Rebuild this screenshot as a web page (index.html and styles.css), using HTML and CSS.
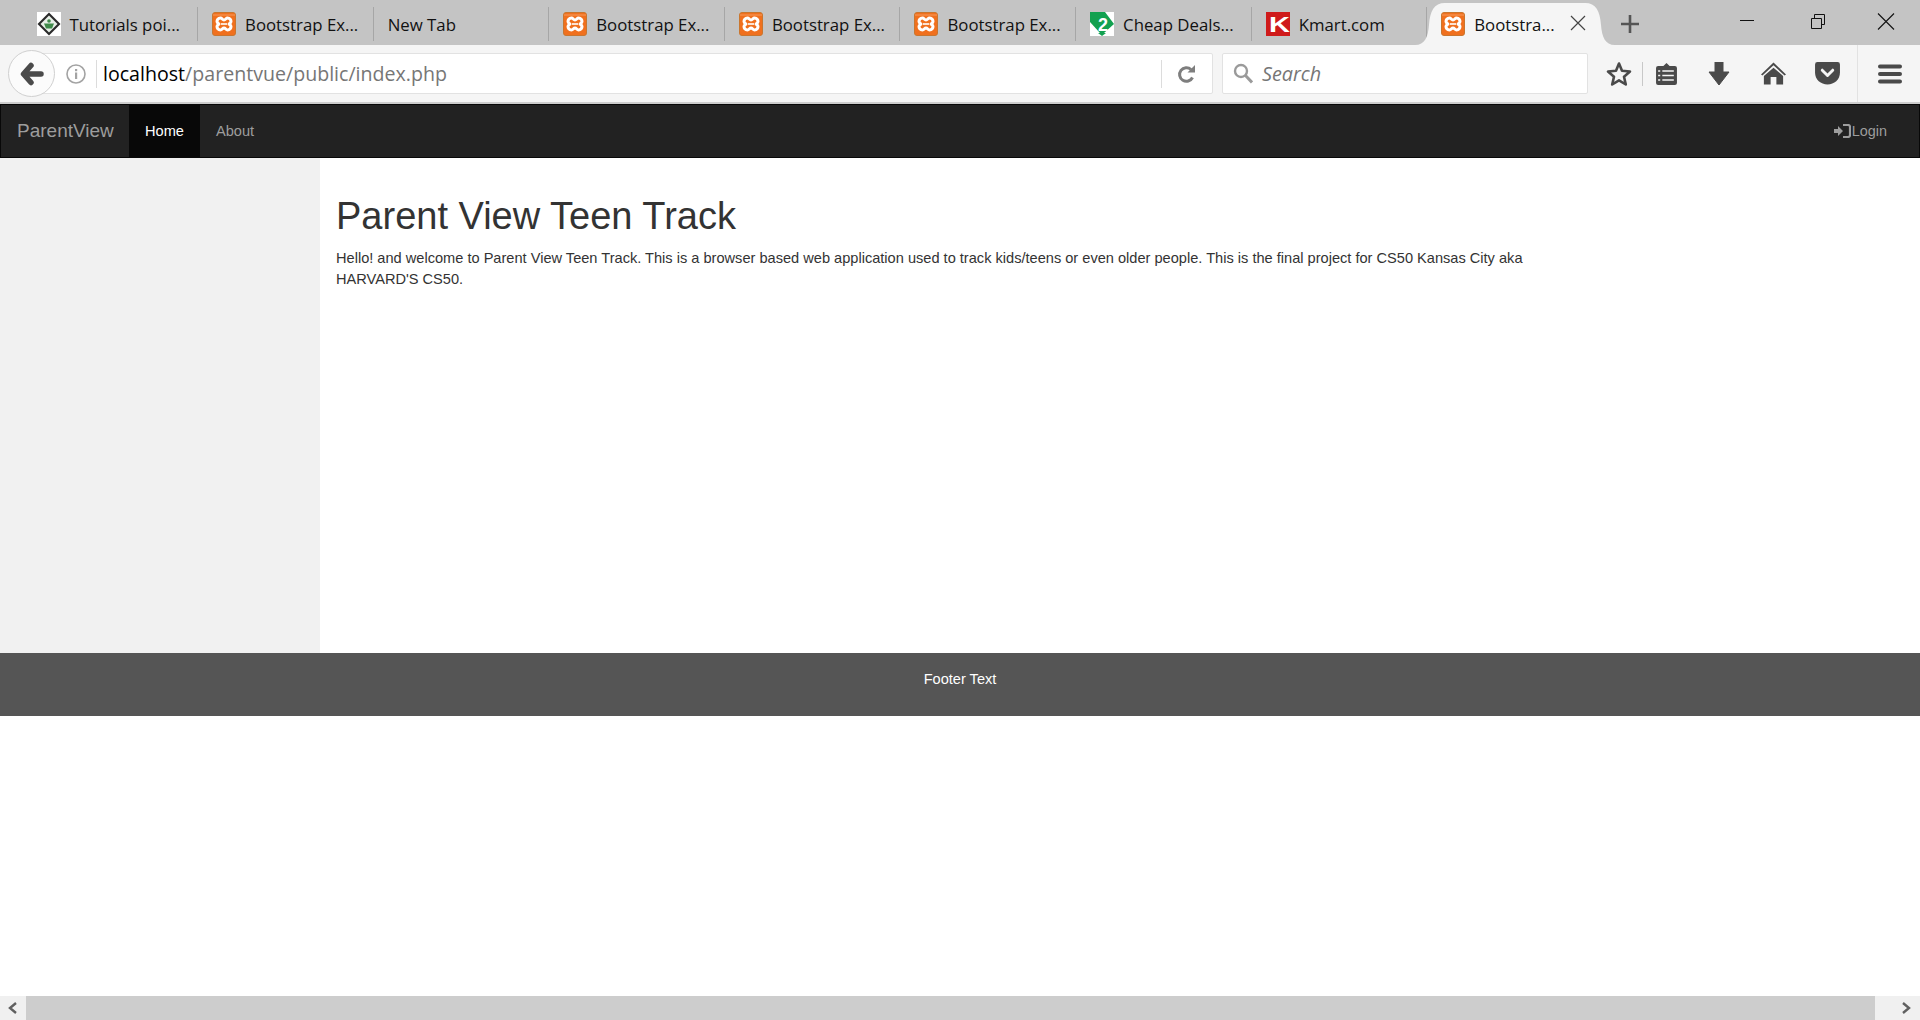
FILE: index.html
```html
<html>
<head>
<title>Bootstrap Example</title>
<link rel="stylesheet" href="styles.css">
</head>
<body>

<svg class="defs" width="0" height="0">
  <symbol id="xampp" viewBox="0 0 24 24">
    <rect x="0.5" y="0.5" width="23" height="23" rx="2.500" fill="#f0701e" stroke="#c9762f"/>
    <path d="M1 3H23" stroke="#f79a5c" stroke-width="1"/>
    <path d="M8.500 6C10 6 10.500 8 12 8C13.500 8 14 6 15.500 6C18 6 19 8 19 9.500C19 11 17 11.500 17 12C17 12.500 19 13 19 14.500C19 16 18 18 15.500 18C14 18 13.500 16 12 16C10.500 16 10 18 8.500 18C6 18 5 16 5 14.500C5 13 7 12.500 7 12C7 11.500 5 11 5 9.500C5 8 6 6 8.500 6z" fill="none" stroke="#fff" stroke-width="3"/>
    <path d="M9 12H15" stroke="#fff" stroke-width="1.600"/>
  </symbol>
</svg>

<div class="tabstrip">
  <div class="tab">
    <svg class="favicon" viewBox="0 0 24 24">
      <rect width="24" height="24" fill="#fff"/>
      <path d="M12 0.500 23.500 12 12 23.500 0.500 12z" fill="#2a2a2a"/>
      <path d="M12 3.500 20.500 12 12 20.500 3.500 12z" fill="#e8efe8"/>
      <path d="M7 11.500H17L15 16.500H9z" fill="#3f8a4a"/>
      <circle cx="12" cy="9" r="1.800" fill="#3f8a4a"/>
    </svg>
    <span>Tutorials poi...</span>
  </div>
  <div class="tab"><svg class="favicon"><use href="#xampp"/></svg><span>Bootstrap Ex...</span></div>
  <div class="tab tab-plain"><span>New Tab</span></div>
  <div class="tab"><svg class="favicon"><use href="#xampp"/></svg><span>Bootstrap Ex...</span></div>
  <div class="tab"><svg class="favicon"><use href="#xampp"/></svg><span>Bootstrap Ex...</span></div>
  <div class="tab"><svg class="favicon"><use href="#xampp"/></svg><span>Bootstrap Ex...</span></div>
  <div class="tab">
    <svg class="favicon" viewBox="0 0 24 24">
      <rect width="24" height="24" fill="#fff"/>
      <path d="M0 0H15L24 12 14 21H10L0 10z" fill="#12a150"/>
      <path d="M8 21H16L12 24z" fill="#12a150"/>
      <text x="13" y="19" class="deal-num">2</text>
    </svg>
    <span>Cheap Deals...</span>
  </div>
  <div class="tab">
    <svg class="favicon" viewBox="0 0 24 24">
      <rect width="24" height="24" fill="#cf1a1a"/>
      <text x="3" y="20" class="kmart-k" textLength="21" lengthAdjust="spacingAndGlyphs">K</text>
    </svg>
    <span>Kmart.com</span>
  </div>
  <div class="tab tab-active">
    <svg class="tab-shape" viewBox="0 0 200 42" preserveAspectRatio="none">
      <path d="M0 42C10 42 13 34 14 22 15 8 19 0 30 0H170C181 0 185 8 186 22 187 34 190 42 200 42z" fill="#f5f5f5"/>
    </svg>
    <svg class="favicon"><use href="#xampp"/></svg>
    <span>Bootstra...</span>
    <svg class="tab-close" viewBox="0 0 16 16"><path d="M1 1 15 15M15 1 1 15" stroke="#444" stroke-width="1.200" fill="none"/></svg>
  </div>
  <svg class="newtab" viewBox="0 0 20 20"><path d="M10 1V19M1 10H19" stroke="#555" stroke-width="2.600" fill="none"/></svg>
  <div class="winctl">
    <svg class="winbtn" viewBox="0 0 70 40"><path d="M30 20.500H44" stroke="#111" stroke-width="1" fill="none"/></svg>
    <svg class="winbtn" viewBox="0 0 70 40"><path d="M31.500 18.500H41.500V28.500H31.500zM34.500 18.500V14.500H44.500V24.500H41.500" stroke="#111" stroke-width="1" fill="none"/></svg>
    <svg class="winbtn" viewBox="0 0 70 40"><path d="M28 13.500 44 29.500M44 13.500 28 29.500" stroke="#111" stroke-width="1.100" fill="none"/></svg>
  </div>
</div>

<div class="toolbar">
  <div class="backbtn">
    <svg width="24" height="24" viewBox="0 0 24 24"><path d="M11 3.500 3.500 12 11 20.500M4 12H21" stroke="#4a4a4a" stroke-width="5.500" stroke-linejoin="round" stroke-linecap="round" fill="none"/></svg>
  </div>
  <div class="urlbar">
    <svg class="info" viewBox="0 0 20 20">
      <circle cx="10" cy="10" r="9" fill="none" stroke="#a3a3a3" stroke-width="1.600"/>
      <rect x="9" y="8.500" width="2.200" height="6.500" fill="#a3a3a3"/>
      <rect x="9" y="5" width="2.200" height="2.200" fill="#a3a3a3"/>
    </svg>
    <div class="url"><span class="url-host">localhost</span>/parentvue/public/index.php</div>
    <div class="reload">
      <svg width="20" height="20" viewBox="0 0 20 20"><path d="M15.500 13.500A6.800 6.800 0 1 1 14 5.500" stroke="#7e7e7e" stroke-width="3" fill="none"/><path d="M10.500 8.500H18V1z" fill="#7e7e7e"/></svg>
    </div>
  </div>
  <div class="searchbar">
    <svg width="20" height="21" viewBox="0 0 20 21"><circle cx="8" cy="8" r="6" fill="none" stroke="#9a9a9a" stroke-width="2.400"/><path d="M12.500 12.500 19 19.500" stroke="#9a9a9a" stroke-width="3"/></svg>
    <span>Search</span>
  </div>
  <div class="tools">
    <svg class="tool tool-star" viewBox="0 0 26 26"><path d="M13 2.500 16 9.800 24 10.500 18 15.700 19.800 23.500 13 19.400 6.200 23.500 8 15.700 2 10.500 10 9.800z" fill="none" stroke="#4a4a4a" stroke-width="2.600" stroke-linejoin="round"/></svg>
    <div class="tool-sep"></div>
    <svg class="tool tool-list" viewBox="0 0 22 24" preserveAspectRatio="none">
      <path d="M3 4H8L11 1 14 4H19Q21 4 21 6V21Q21 23 19 23H3Q1 23 1 21V6Q1 4 3 4z" fill="#4a4a4a"/>
      <path d="M7 9H18M7 13.500H18M7 18H18M3 9H5M3 13.500H5M3 18H5" stroke="#f5f5f5" stroke-width="1.600"/>
    </svg>
    <svg class="tool tool-down" viewBox="0 0 22 24"><path d="M7 0H15V10H21L11 23 1 10H7z" fill="#4a4a4a" stroke="#4a4a4a" stroke-linejoin="round"/></svg>
    <svg class="tool tool-home" viewBox="0 0 26 24"><path d="M13 0 26 12.500 24.500 13.500 13 3 1.500 13.500 0 12.500z" fill="#4a4a4a"/><path d="M13 5.500 23 14V23H16V15H10V23H3V14z" fill="#4a4a4a"/></svg>
    <svg class="tool tool-pocket" viewBox="0 0 26 24"><path d="M2.500 0H23.500Q26 0 26 2.500V11C26 18.500 20 23.500 13 23.500S0 18.500 0 11V2.500Q0 0 2.500 0z" fill="#4a4a4a"/><path d="M7.500 8.500 13 14 18.500 8.500" stroke="#f5f5f5" stroke-width="3" stroke-linecap="round" stroke-linejoin="round" fill="none"/></svg>
    <div class="menu-wrap">
      <svg class="tool-menu" viewBox="0 0 24 20"><path d="M2 2.500H22M2 10H22M2 17.500H22" stroke="#4a4a4a" stroke-width="4" stroke-linecap="round"/></svg>
    </div>
  </div>
</div>

<div class="navbar">
  <a class="brand">ParentView</a>
  <a class="nav-link nav-active">Home</a>
  <a class="nav-link">About</a>
  <a class="nav-link nav-login">
    <svg width="17" height="14" viewBox="0 0 17 14"><path d="M0 5H4V2L9 7 4 12V9H0z" fill="#9d9d9d"/><path d="M9 1H14Q16 1 16 3V11Q16 13 14 13H9" stroke="#9d9d9d" stroke-width="2.200" fill="none"/></svg>Login
  </a>
</div>

<div class="main">
  <div class="sidebar"></div>
  <div class="content">
    <h1>Parent View Teen Track</h1>
    <p>Hello! and welcome to Parent View Teen Track. This is a browser based web application used to track kids/teens or even older people. This is the final project for CS50 Kansas City aka HARVARD'S CS50.</p>
  </div>
</div>

<div class="footer">Footer Text</div>

<div class="spacer"></div>

<div class="scrollbar">
  <div class="scroll-left">
    <svg width="10" height="12" viewBox="0 0 10 12"><path d="M8 1 2 6 8 11" stroke="#606060" stroke-width="2.400" fill="none"/></svg>
  </div>
  <div class="scroll-track"></div>
  <div class="scroll-right">
    <svg width="10" height="12" viewBox="0 0 10 12"><path d="M2 1 8 6 2 11" stroke="#606060" stroke-width="2.400" fill="none"/></svg>
  </div>
</div>

</body>
</html>
```

FILE: styles.css
```css
body {
  margin: 0;
  height: 1020px;
  overflow: hidden;
  display: flex;
  flex-direction: column;
  font-family: "Liberation Sans", Arial, sans-serif;
  font-size: 14.600px;
  line-height: 21px;
  color: #333;
  background-color: #fff;
}

.defs {
  position: absolute;
}

/* browser tabs */
.tabstrip {
  height: 45px;
  flex: none;
  display: flex;
  padding-left: 22.500px;
  background-color: #c4c4c4;
  font-family: "Open Sans", "Noto Sans", sans-serif;
  font-size: 16.800px;
  color: #111;
}
.tab {
  position: relative;
  width: 175.600px;
  box-sizing: border-box;
  padding: 3px 0 0 14px;
  display: flex;
  align-items: center;
  white-space: nowrap;
}
.tab::after {
  content: "";
  position: absolute;
  right: 0;
  top: 7px;
  bottom: 4px;
  width: 1px;
  background-color: #a6a6a6;
}
.tab-active::after {
  display: none;
}
.tab-shape {
  position: absolute;
  left: -12px;
  top: 3px;
  width: 200px;
  height: 42px;
}
.favicon {
  position: relative;
  width: 24px;
  height: 24px;
  margin-right: 9px;
  flex: none;
}
.tab span {
  position: relative;
}
.tab-close {
  position: absolute;
  left: 143px;
  top: 15px;
  width: 16px;
  height: 16px;
}
.deal-num {
  font-family: "Liberation Sans", sans-serif;
  font-weight: bold;
  font-size: 18px;
  fill: #fff;
  text-anchor: middle;
}
.kmart-k {
  font-family: "Liberation Sans", sans-serif;
  font-weight: bold;
  font-size: 22px;
  fill: #fff;
}
.newtab {
  width: 20px;
  height: 20px;
  margin: 14px 0 0 17px;
}
.winctl {
  margin-left: auto;
  display: flex;
}
.winbtn {
  width: 70px;
  height: 40px;
}

/* nav toolbar */
.toolbar {
  height: 57px;
  flex: none;
  box-sizing: content-box;
  display: flex;
  align-items: center;
  padding-left: 8px;
  background-color: #f5f5f5;
  border-bottom: 2px solid #cdcdcd;
}
.backbtn {
  position: relative;
  z-index: 1;
  width: 47px;
  height: 47px;
  box-sizing: border-box;
  margin-right: -15px;
  display: flex;
  align-items: center;
  justify-content: center;
  border: 1px solid #d0d0d0;
  border-radius: 50%;
  background-color: #fbfbfb;
}
.urlbar {
  width: 1173px;
  height: 41px;
  box-sizing: border-box;
  display: flex;
  align-items: center;
  padding-left: 25px;
  background-color: #fff;
  border: 1px solid #e2e2e2;
  border-radius: 2px;
  font-family: "Open Sans", "Noto Sans", sans-serif;
  font-size: 19.600px;
  color: #767676;
}
.info {
  width: 20px;
  height: 20px;
  flex: none;
  margin-right: 10px;
}
.url {
  flex: 1;
  height: 28px;
  line-height: 28px;
  border-left: 1px solid #dcdcdc;
  padding-left: 6px;
  white-space: nowrap;
}
.url-host {
  color: #000;
}
.reload {
  width: 50px;
  height: 28px;
  display: flex;
  align-items: center;
  justify-content: center;
  border-left: 1px solid #dcdcdc;
}
.searchbar {
  width: 366px;
  height: 41px;
  box-sizing: border-box;
  margin-left: 9px;
  padding-left: 10px;
  display: flex;
  align-items: center;
  gap: 9px;
  background-color: #fff;
  border: 1px solid #e2e2e2;
  border-radius: 2px;
  font-family: "Open Sans", "Noto Sans", sans-serif;
  font-style: italic;
  font-size: 19.800px;
  color: #767676;
}
.tools {
  flex: 1;
  height: 100%;
  display: flex;
  align-items: center;
  padding-left: 18px;
  box-sizing: border-box;
}
.tool {
  flex: none;
}
.tool-star {
  width: 26px;
  height: 26px;
}
.tool-sep {
  width: 1px;
  height: 24px;
  margin: 0 12px 0 10px;
  background-color: #c8c8c8;
}
.tool-list {
  width: 23px;
  height: 24px;
}
.tool-down {
  width: 22px;
  height: 24px;
  margin-left: 30px;
}
.tool-home {
  width: 25px;
  height: 24px;
  margin-left: 31px;
}
.tool-pocket {
  width: 25px;
  height: 23px;
  margin-left: 29px;
}
.menu-wrap {
  height: 100%;
  margin-left: 17px;
  padding-left: 20px;
  display: flex;
  align-items: center;
  border-left: 1px solid #e2e2e2;
}
.tool-menu {
  width: 24px;
  height: 20px;
}

/* site nav */
.navbar {
  height: 52px;
  flex: none;
  display: flex;
  align-items: stretch;
  background-color: #222;
  border: 1px solid #080808;
  color: #9d9d9d;
}
.brand {
  width: 128px;
  padding-left: 16px;
  box-sizing: border-box;
  font-size: 19px;
  line-height: 51px;
}
.nav-link {
  padding: 0 16px;
  line-height: 52px;
}
.nav-active {
  background-color: #080808;
  color: #fff;
}
.nav-login {
  margin-left: auto;
  padding-right: 32px;
  display: flex;
  align-items: center;
  gap: 1px;
  font-size: 14.400px;
}

.main {
  height: 495px;
  flex: none;
  display: flex;
}
.sidebar {
  width: 320px;
  flex: none;
  background-color: #f1f1f1;
}
.content {
  width: 1210px;
  padding-left: 16px;
}
h1 {
  margin: 37px 0 11px 0;
  font-size: 38px;
  font-weight: 500;
  line-height: 42px;
}
p {
  margin: 0;
}

.footer {
  height: 63px;
  flex: none;
  box-sizing: border-box;
  padding-top: 16px;
  text-align: center;
  background-color: #555;
  color: #fff;
}
.spacer {
  flex: 1;
}

.scrollbar {
  height: 24px;
  flex: none;
  display: flex;
  background-color: #cdcdcd;
}
.scroll-left, .scroll-right {
  display: flex;
  align-items: center;
  background-color: #f0f0f0;
}
.scroll-left {
  width: 26px;
  padding-left: 8px;
  box-sizing: border-box;
}
.scroll-right {
  width: 45px;
  padding-left: 26px;
  box-sizing: border-box;
}
.scroll-track {
  flex: 1;
}
```
